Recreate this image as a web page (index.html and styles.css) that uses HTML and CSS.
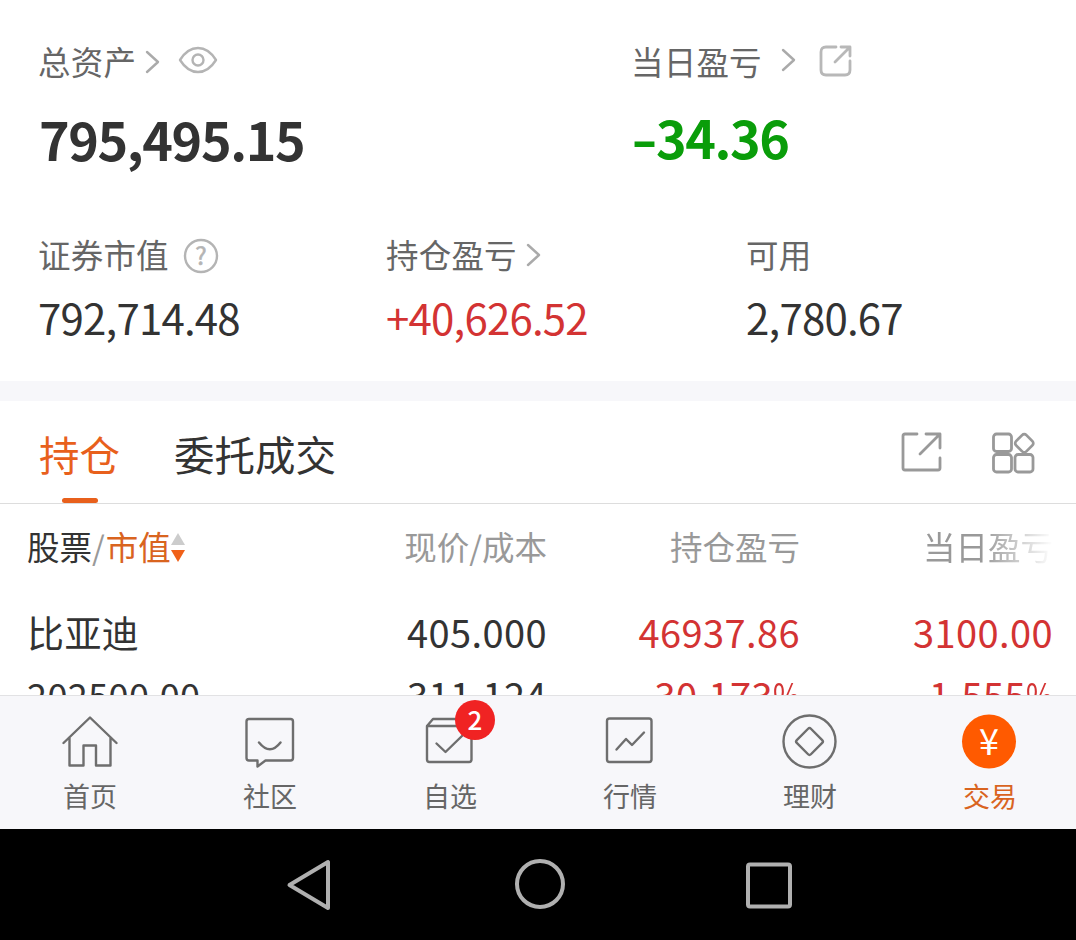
FILE: index.html
```html
<!DOCTYPE html>
<html lang="zh-CN">
<head>
<meta charset="UTF-8">
<meta name="viewport" content="width=device-width, initial-scale=1">
<title>交易</title>
<link rel="stylesheet" href="styles.css">
</head>
<body>
<div class="page">
<!-- 资产 -->
	<div class="asset">
		<div class="asset-row asset-main">
			<div class="asset-item">
				<div class="label">总资产
					<svg class="arrow arrow-total" width="16" height="24" viewBox="0 0 16 24"><path d="M2 2l11 10L2 22"/></svg>
					<svg class="eye" width="40" height="28" viewBox="0 0 40 28"><path d="M2 14C7 6 13 2 20 2s13 4 18 12c-5 8-11 12-18 12S7 22 2 14z"/><circle cx="20" cy="14" r="5.5"/></svg>
				</div>
				<div class="total">795,495.15</div>
			</div>
			<div class="asset-item">
				<div class="label">当日盈亏
					<svg class="arrow arrow-today" width="16" height="24" viewBox="0 0 16 24"><path d="M2 2l11 10L2 22"/></svg>
					<svg class="share" width="34" height="34" viewBox="0 0 34 34"><path d="M17 3H7Q2 3 2 8v18q0 5 5 5h19q5 0 5-5v-9M22 3h9v9M31 3L16 18"/></svg>
				</div>
				<div class="total today"><span class="minus">-</span>34.36</div>
			</div>
		</div>
		<div class="asset-row asset-sub">
			<div class="asset-item">
				<div class="label">证券市值
					<svg class="help" width="36" height="36" viewBox="0 0 36 36"><circle cx="18" cy="18" r="16"/><text x="18" y="26.500" text-anchor="middle">?</text></svg>
				</div>
				<div class="value">792,714.48</div>
			</div>
			<div class="asset-item">
				<div class="label">持仓盈亏
					<svg class="arrow arrow-hold" width="16" height="24" viewBox="0 0 16 24"><path d="M2 2l11 10L2 22"/></svg>
				</div>
				<div class="value red">+40,626.52</div>
			</div>
			<div class="asset-item">
				<div class="label">可用</div>
				<div class="value">2,780.67</div>
			</div>
		</div>
	</div>
<!-- 选项卡 -->
	<div class="tabs">
		<a class="tab active">持仓</a>
		<a class="tab">委托成交</a>
		<div class="tools">
			<svg width="44" height="44" viewBox="0 0 44 44"><path d="M18 4H6Q4 4 4 6v32q0 2 2 2h33q2 0 2-2V28M27 4h14v14M41 4L21 24"/></svg>
			<svg width="44" height="44" viewBox="0 0 44 44"><rect x="2.500" y="4" width="18" height="17.500" rx="3"/><rect x="2.500" y="24.500" width="18" height="17.500" rx="3"/><rect x="24" y="24.500" width="18" height="17.500" rx="3"/><rect x="26" y="6" width="14.500" height="14.500" rx="3" transform="rotate(45 33.250 13.250)"/></svg>
		</div>
	</div>
<!-- 持仓列表 -->
	<div class="stock">
		<div class="stock-row stock-head">
			<div class="name">股票<i>/</i><em>市值</em><span class="sort"></span></div>
			<div>现价/成本</div>
			<div>持仓盈亏</div>
			<div class="fade">当日盈亏</div>
		</div>
		<div class="stock-row stock-line">
			<div class="name">比亚迪</div>
			<div>405.000</div>
			<div class="red">46937.86</div>
			<div class="red">3100.00</div>
		</div>
		<div class="stock-row stock-line small">
			<div class="name">202500.00</div>
			<div>311.124</div>
			<div class="red">30.173<span class="percent">%</span></div>
			<div class="red">1.555<span class="percent">%</span></div>
		</div>
	</div>
<!-- 底部导航 -->
	<div class="nav">
		<a class="nav-item">
			<svg width="60" height="60" viewBox="0 0 60 60"><path d="M3.500 32L30 6.500 56.500 32M9.500 27v27.500h14v-20H36v20h14.500V27"/></svg>
			首页
		</a>
		<a class="nav-item">
			<svg width="60" height="60" viewBox="0 0 60 60"><path d="M9 8h41.500q2.500 0 2.500 2.500V47q0 2.500-2.500 2.500H25.500L17.500 55.500v-6H9q-2.500 0-2.500-2.500V10.500Q6.500 8 9 8zM19 31.500q11 13.500 21.500 0"/></svg>
			社区
		</a>
		<a class="nav-item">
			<svg width="60" height="60" viewBox="0 0 60 60"><path d="M7 15h44.500V48.500q0 2.500-2.500 2.500H9.500Q7 51 7 48.500zl6-7h33l5.500 7M16.500 32.500l9 8.500L43 24"/></svg>
			自选
			<span class="badge">2</span>
		</a>
		<a class="nav-item">
			<svg width="60" height="60" viewBox="0 0 60 60"><rect x="7" y="7.500" width="44.500" height="43.500" rx="2.500"/><path d="M16.500 38.500L26 28l6 6 12-12.500"/></svg>
			行情
		</a>
		<a class="nav-item">
			<svg width="60" height="60" viewBox="0 0 60 60"><circle cx="29.500" cy="30.500" r="26"/><rect x="19.500" y="20.500" width="20" height="20" rx="2" transform="rotate(45 29.500 30.500)"/></svg>
			理财
		</a>
		<a class="nav-item active">
			<svg width="60" height="60" viewBox="0 0 60 60"><circle cx="29" cy="30.500" r="27"/><text x="29" y="44" text-anchor="middle">¥</text></svg>
			交易
		</a>
	</div>
<!-- 系统按键 -->
	<div class="system">
		<svg width="46" height="54" viewBox="0 0 46 54"><path d="M42 4v46L3.500 27z"/></svg>
		<svg width="54" height="54" viewBox="0 0 54 54"><circle cx="27" cy="26" r="23"/></svg>
		<svg width="48" height="54" viewBox="0 0 48 54"><rect x="3" y="6.500" width="42" height="42" rx="2"/></svg>
	</div>
</div>
</body>
</html>
```
FILE: styles.css
```css
*{
	margin:0;
	padding:0;
	box-sizing:border-box;
}
body{
	font-family:"Noto Sans CJK SC",sans-serif;
	font-size:32.5px;
	color:#333;
	background:#fff;
	overflow:hidden;
}
svg{
	display:block;
	flex:none;
	fill:none;
	stroke-linecap:round;
	stroke-linejoin:round;
}
.page{
	width:1076px;
	height:940px;
	display:flex;
	flex-direction:column;
	overflow:hidden;
}
.red{
	color:#d33333;
}
/* 资产 */
.asset{
	height:401px;
	padding:41px 0 0 38px;
	border-bottom:20px solid #f7f7fa;
}
.asset-row{
	display:grid;
}
.asset-main{
	grid-template-columns:593px 1fr;
	height:193px;
}
.asset-sub{
	grid-template-columns:348px 360px 1fr;
}
.label{
	display:flex;
	align-items:center;
	height:40px;
	line-height:40px;
	letter-spacing:.2px;
	color:#666;
}
.arrow{
	stroke:#aaa;
	stroke-width:2.4;
}
.arrow-total{
	margin:2px 0 0 9px;
}
.arrow-today{
	margin:0 0 2px 19px;
}
.arrow-hold{
	margin:2px 0 0 9px;
}
.eye{
	margin:0 0 2px 17px;
	stroke:#b4b4b4;
	stroke-width:2.4;
}
.share{
	margin:0 0 1px 22px;
	stroke:#b8b8b8;
	stroke-width:2.8;
}
.help{
	margin:3px 0 0 14px;
	stroke:#b4b4b4;
	stroke-width:2.4;
}
.help text{
	fill:#b4b4b4;
	stroke-width:.6;
	font-size:24px;
}
.total{
	margin-top:28px;
	height:60px;
	padding-left:1px;
	line-height:60px;
	font-size:52px;
	font-weight:700;
	letter-spacing:-1.4px;
}
.today{
	margin-top:26px;
	padding-left:0;
	color:#0a9d0a;
}
.minus{
	display:inline-block;
	width:25px;
	transform:scaleX(1.4);
	transform-origin:0 50%;
}
.value{
	margin-top:18px;
	height:50px;
	line-height:50px;
	font-size:42px;
	letter-spacing:-.8px;
}
/* 选项卡 */
.tabs{
	display:flex;
	height:103px;
	padding:0 41px 0 39px;
	border-bottom:1px solid #ddd;
}
.tab{
	position:relative;
	height:102px;
	margin-right:54px;
	line-height:105px;
	font-size:40.5px;
}
.tab.active{
	color:#e8601c;
}
.tab.active:after{
	content:'';
	width:36px;
	height:5px;
	border-radius:3px;
	background:#e8601c;
	position:absolute;
	left:50%;
	bottom:0;
	margin-left:-18px; /* 居中 */
}
.tools{
	display:flex;
	gap:48px;
	margin:29px 0 0 auto;
}
.tools svg{
	stroke:#999;
	stroke-width:2.8;
}
/* 持仓列表 */
.stock{
	height:191px;
	overflow:hidden;
}
.stock-row{
	display:grid;
	grid-template-columns:267px 253px 253px 253px;
	padding-left:27px;
	text-align:right;
}
.stock-row .name{
	text-align:left;
}
.stock-head{
	height:82px;
	line-height:84px;
	color:#999;
}
.stock-head .name{
	display:flex;
	align-items:center;
	color:#333;
}
.stock-head i{
	font-style:normal;
	color:#999;
}
.stock-head em{
	margin-left:1px;
	font-style:normal;
	color:#d9641f;
}
.sort{
	display:grid;
	gap:5px;
	margin-top:2px;
}
.sort:before,
.sort:after{
	content:'';
	border:7px solid transparent;
}
.sort:before{
	border-top:0;
	border-bottom:12px solid #ccc;
}
.sort:after{
	border-bottom:0;
	border-top:12px solid #f06018;
}
.fade{
	-webkit-mask-image:linear-gradient(to right,#000 72%,transparent);
	mask-image:linear-gradient(to right,#000 72%,transparent);
}
.stock-line{
	height:62px;
	margin-top:14px;
	line-height:64px;
	font-size:38px;
	letter-spacing:.4px;
}
.stock-line .name{
	font-size:37px;
}
.stock-line.small{
	margin-top:0;
	line-height:66px;
}
.stock-line.small .name{
	line-height:64px;
	font-size:36px;
}
.percent{
	display:inline-block;
	width:27px;
	text-align:left;
	transform:scaleX(.77);
	transform-origin:0 50%;
}
/* 底部导航 */
.nav{
	display:grid;
	grid-template-columns:repeat(6,180px);
	height:134px;
	border-top:1px solid #e2e2e4;
	background:#f7f7fa;
}
.nav-item{
	position:relative;
	display:flex;
	flex-direction:column;
	align-items:center;
	padding-top:15px;
	line-height:49px;
	font-size:27px;
	color:#666;
}
.nav-item svg{
	stroke:#6e6e6e;
	stroke-width:2.4;
}
.nav-item.active{
	color:#d9641f;
}
.nav-item.active svg{
	fill:#ff5a00;
	stroke:none;
}
.nav-item.active text{
	fill:#fff;
	font-size:36px;
}
.badge{
	width:40px;
	height:40px;
	line-height:38px;
	border-radius:50%;
	font-size:26px;
	font-weight:500;
	text-align:center;
	color:#fff;
	background:#f02323;
	position:absolute;
	left:95px;
	top:4px;
}
/* 系统按键 */
.system{
	display:flex;
	align-items:center;
	gap:180px;
	height:111px;
	padding-left:286px;
	background:#000;
}
.system svg{
	stroke:#b0b0b0;
	stroke-width:4;
}
.system svg:nth-child(2){
	margin:0 -2px 0 1px;
}
```
